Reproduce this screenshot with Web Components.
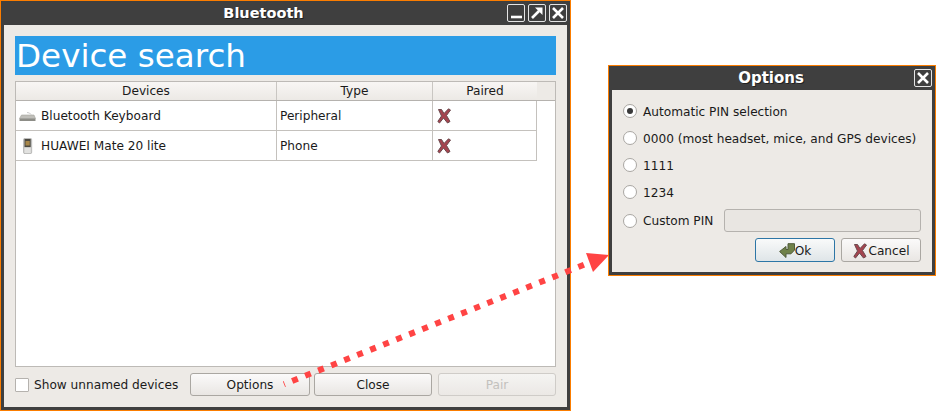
<!DOCTYPE html>
<html>
<head>
<meta charset="utf-8">
<title>Bluetooth</title>
<style>
    html, body { margin: 0; height: 411px; background: #fff; overflow: hidden; }
    body { font-family: "DejaVu Sans", sans-serif; font-size: 12.15px; color: #1a1a1a; position: relative; }
    #arrow { position: absolute; left: 0; top: 0; z-index: 5; }
    #main { position: absolute; left: 0; top: 0; width: 571px; height: 411px; --title-size: 14.5px; }
    #options { position: absolute; left: 608px; top: 65px; width: 328px; height: 211px; --title-size: 15px; }
</style>
</head>
<body>

<template id="window-template">
    <style>
        :host { display: block; box-sizing: border-box; border: 1px solid #fb7d00; background: #3f3f3f; }
        .frame { display: flex; flex-direction: column; height: 100%; box-sizing: border-box; padding: 0 3px 3px 3px; }
        .title { height: 24px; flex: none; display: flex; align-items: center; padding-left: 16px; }
        .name { flex: 1; text-align: center; color: #fff; font-weight: bold; font-size: var(--title-size); text-shadow: 1px 1px 0 #222; }
        .buttons { display: flex; gap: 3px; }
        .body { flex: 1; min-height: 0; background: #edeae6; }
    </style>
    <div class="frame">
        <div class="title">
            <div class="name"></div>
            <div class="buttons"><slot name="buttons"></slot></div>
        </div>
        <div class="body"><slot></slot></div>
    </div>
</template>

<template id="title-button-template">
    <style>
        :host { display: block; width: 18px; height: 18px; box-sizing: border-box; border: 1px solid #e4e4e4; border-radius: 2px; }
        svg { display: block; }
    </style>
    <svg width="16" height="16" viewBox="0 0 16 16" fill="none" stroke="#fff" stroke-width="2.6"></svg>
</template>

<template id="button-template">
    <style>
        :host { display: block; }
        button {
            display: flex; align-items: center; justify-content: center; width: 100%; height: 100%;
            box-sizing: border-box; padding: var(--button-pad, 0) 0 0 0; margin: 0; font: inherit; color: #1a1a1a;
            border: 1px solid #aaa7a2; border-radius: 3px;
            background: linear-gradient(#fbfafa, #e9e6e3);
        }
        :host([disabled]) button { color: #c3c1bd; border-color: #cfccc8; background: linear-gradient(#f5f4f2, #ebe8e5); }
        :host([default]) button { border-color: #2d76a6; background: linear-gradient(#f9fafa, #dfe5e8); }
    </style>
    <button type="button"><slot name="icon"></slot><slot></slot></button>
</template>

<template id="radio-template">
    <style>
        :host { display: flex; align-items: center; gap: 6px; height: 14px; white-space: nowrap; }
        .dot {
            width: 14px; height: 14px; box-sizing: border-box; border-radius: 50%; flex: none;
            border: 1px solid #a9a6a2; background: #fff; display: flex; align-items: center; justify-content: center;
        }
        :host([checked]) .dot::after { content: ""; width: 6px; height: 6px; border-radius: 50%; background: #3a3a3a; }
        .text { padding-top: 1px; }
    </style>
    <span class="dot"></span><span class="text"><slot></slot></span>
</template>

<template id="check-template">
    <style>
        :host { display: flex; align-items: center; gap: 5px; white-space: nowrap; }
        .box { width: 14px; height: 14px; box-sizing: border-box; border: 1px solid #b5b2ae; background: #fff; border-radius: 1px; }
    </style>
    <span class="box"></span><span><slot></slot></span>
</template>

<template id="device-table-template">
    <style>
        :host { display: block; box-sizing: border-box; border: 1px solid #bdbab6; background: #fff; }
        .head { display: flex; height: 19px; box-sizing: border-box; background: #edeae6; border-bottom: 1px solid #b5b2ae; }
        .head div { box-sizing: border-box; text-align: center; line-height: 18px; border-right: 1px solid #c9c6c2; background: linear-gradient(#f8f6f4, #ece9e5); }
        .head .c3 { border-right: none; }
        .c1 { width: 261px; }
        .c2 { width: 156px; }
        .c3 { width: 104px; }
    </style>
    <div class="head">
        <div class="c1">Devices</div>
        <div class="c2">Type</div>
        <div class="c3">Paired</div>
    </div>
    <slot></slot>
</template>

<template id="device-row-template">
    <style>
        :host { display: flex; width: 521px; height: 30px; box-sizing: border-box; border-bottom: 1px solid #c4c1bd; border-right: 1px solid #c4c1bd; }
        .cell { display: flex; align-items: center; box-sizing: border-box; border-right: 1px solid #c4c1bd; }
        .name { width: 261px; padding-left: 3px; gap: 5px; }
        .type { width: 156px; padding-left: 3px; }
        .paired { flex: 1; border-right: none; padding-left: 3px; }
        svg { display: block; flex: none; }
    </style>
    <div class="cell name"><slot name="icon"></slot><span class="label"></span></div>
    <div class="cell type"></div>
    <div class="cell paired">
        <svg width="16" height="16" viewBox="0 0 16 16">
            <path d="M2.5 1.5 L5.5 1.5 L8 5.5 L12.5 .8 L14.5 2 L10.5 7.5 L14 13.5 L11.5 15 L7.5 10 L3.5 15 L1.8 13.5 L5.5 8 Z" fill="#a5444f" stroke="#6b4a4e" stroke-width="1"/>
        </svg>
    </div>
</template>

<script>
    function shadowFrom(el, id) {
        const shadow = el.attachShadow({ mode: "open" });
        shadow.append(document.getElementById(id).content.cloneNode(true));
        return shadow;
    }

    class AppWindow extends HTMLElement {
        constructor() {
            super();
            shadowFrom(this, "window-template");
        }

        connectedCallback() {
            this.shadowRoot.querySelector(".name").textContent = this.getAttribute("name");
        }
    }

    const titleIcons = {
        min: `<path d="M3 12 H14"/>`,
        max: `<path d="M3 13 L10 6"/><path d="M6 2.5 H13.5 V10 Z" fill="#fff" stroke="none"/>`,
        close: `<path d="M3 3 L13 13 M13 3 L3 13"/>`,
    };

    class TitleButton extends HTMLElement {
        constructor() {
            super();
            shadowFrom(this, "title-button-template");
        }

        connectedCallback() {
            this.shadowRoot.querySelector("svg").innerHTML = titleIcons[this.getAttribute("icon")];
        }
    }

    class PushButton extends HTMLElement {
        constructor() {
            super();
            shadowFrom(this, "button-template");
        }
    }

    class RadioOption extends HTMLElement {
        constructor() {
            super();
            shadowFrom(this, "radio-template");
        }
    }

    class CheckOption extends HTMLElement {
        constructor() {
            super();
            shadowFrom(this, "check-template");
        }
    }

    class DeviceTable extends HTMLElement {
        constructor() {
            super();
            shadowFrom(this, "device-table-template");
        }
    }

    class DeviceRow extends HTMLElement {
        constructor() {
            super();
            shadowFrom(this, "device-row-template");
        }

        connectedCallback() {
            this.shadowRoot.querySelector(".label").textContent = this.getAttribute("label");
            this.shadowRoot.querySelector(".type").textContent = this.getAttribute("type");
        }
    }

    class BluetoothPanel extends HTMLElement {
        constructor() {
            super();
            const shadow = this.attachShadow({ mode: "open" });
            shadow.innerHTML = `
                <style>
                    :host { display: flex; flex-direction: column; height: 100%; box-sizing: border-box; padding: 11px 11px 11px 11px; }
                    .banner { height: 39px; flex: none; background: #2b9ce6; color: #fff; font-size: 32.6px; line-height: 40px; padding-left: 1px; margin-bottom: 6px; }
                    device-table { flex: 1; min-height: 0; }
                    .bottom { display: flex; align-items: center; height: 23px; margin-top: 6px; }
                    check-option { width: 175px; }
                    push-button { height: 23px; }
                    .options { width: 120px; margin-right: 4px; }
                    .close { width: 118px; margin-right: 6px; }
                    .pair { width: 118px; }
                </style>
                <div class="banner">Device search</div>
                <device-table><slot></slot></device-table>
                <div class="bottom">
                    <check-option>Show unnamed devices</check-option>
                    <push-button class="options">Options</push-button>
                    <push-button class="close">Close</push-button>
                    <push-button class="pair" disabled>Pair</push-button>
                </div>`;
        }
    }

    class OptionsPanel extends HTMLElement {
        constructor() {
            super();
            const shadow = this.attachShadow({ mode: "open" });
            shadow.innerHTML = `
                <style>
                    :host { display: flex; flex-direction: column; height: 100%; box-sizing: border-box; padding: 14px 11px 0 11px; }
                    radio-option { margin-bottom: 13px; }
                    .custom { display: flex; align-items: center; gap: 11px; margin-top: -3px; }
                    .custom radio-option { margin: 0; }
                    .pin { width: 197px; height: 23px; box-sizing: border-box; border: 1px solid #b5b2ae; border-radius: 3px; background: #e9e6e2; }
                    .actions { display: flex; justify-content: flex-end; gap: 6px; margin-top: 6px; }
                    push-button { height: 24px; --button-pad: 1px; }
                    .ok { width: 80px; }
                    .cancel { width: 80px; }
                    svg { display: block; }
                </style>
                <radio-option checked>Automatic PIN selection</radio-option>
                <radio-option>0000 (most headset, mice, and GPS devices)</radio-option>
                <radio-option>1111</radio-option>
                <radio-option>1234</radio-option>
                <div class="custom">
                    <radio-option>Custom PIN</radio-option>
                    <div class="pin"></div>
                </div>
                <div class="actions">
                    <push-button class="ok" default>
                        <svg slot="icon" width="16" height="16" viewBox="0 0 16 16"><path d="M0.6 8.5 L7 3.5 V6.5 H9 V0.7 H15.5 V7 L12 10.8 H7 V14.5 Z" fill="#6f8149" stroke="#4f5a3a" stroke-width="1"/></svg>Ok
                    </push-button>
                    <push-button class="cancel">
                        <svg slot="icon" width="16" height="16" viewBox="0 0 16 16"><path d="M2.5 1.5 L5.5 1.5 L8 5.5 L12.5 .8 L14.5 2 L10.5 7.5 L14 13.5 L11.5 15 L7.5 10 L3.5 15 L1.8 13.5 L5.5 8 Z" fill="#a5444f" stroke="#6b4a4e" stroke-width="1"/></svg>Cancel
                    </push-button>
                </div>`;
        }
    }

    customElements.define("app-window", AppWindow);
    customElements.define("title-button", TitleButton);
    customElements.define("push-button", PushButton);
    customElements.define("radio-option", RadioOption);
    customElements.define("check-option", CheckOption);
    customElements.define("device-table", DeviceTable);
    customElements.define("device-row", DeviceRow);
    customElements.define("bluetooth-panel", BluetoothPanel);
    customElements.define("options-panel", OptionsPanel);
</script>

<app-window id="main" name="Bluetooth">
    <title-button slot="buttons" icon="min"></title-button>
    <title-button slot="buttons" icon="max"></title-button>
    <title-button slot="buttons" icon="close"></title-button>
    <bluetooth-panel>
        <device-row label="Bluetooth Keyboard" type="Peripheral">
            <svg slot="icon" width="17" height="16" viewBox="0 0 17 16">
                <path d="M8 4.5 Q11 4.5 12 6.5" fill="none" stroke="#c9c9c9"/>
                <path d="M2.5 7 H15 L16.5 10.5 H0.5 Z" fill="#c0bfba" stroke="#a5a5a0" stroke-width=".6"/>
                <path d="M0.5 10.5 H16.5 V13 H0.5 Z" fill="#8d8d87"/>
            </svg>
        </device-row>
        <device-row label="HUAWEI Mate 20 lite" type="Phone">
            <svg slot="icon" width="17" height="16" viewBox="0 0 17 16">
                <rect x="4.5" y="0.3" width="8.2" height="15.4" rx="1.5" fill="#c9c9c7" stroke="#a5a5a3" stroke-width=".6"/>
                <rect x="5.5" y="1" width="6.2" height="8" fill="#4c4a42"/>
                <rect x="6.5" y="3" width="4.2" height="4.5" fill="#a8874a"/>
                <rect x="5.5" y="10" width="6.2" height="5" fill="#e2e2e0"/>
            </svg>
        </device-row>
    </bluetooth-panel>
</app-window>

<app-window id="options" name="Options">
    <title-button slot="buttons" icon="close"></title-button>
    <options-panel></options-panel>
</app-window>

<svg id="arrow" width="937" height="411" viewBox="0 0 937 411">
    <path d="M284 384.2 L592 261.6" fill="none" stroke="#ff4444" stroke-width="6" stroke-dasharray="6 8" stroke-dashoffset="5.2"/>
    <path d="M609 255 L586 253 L593 272 Z" fill="#ff4444"/>
</svg>

</body>
</html>
